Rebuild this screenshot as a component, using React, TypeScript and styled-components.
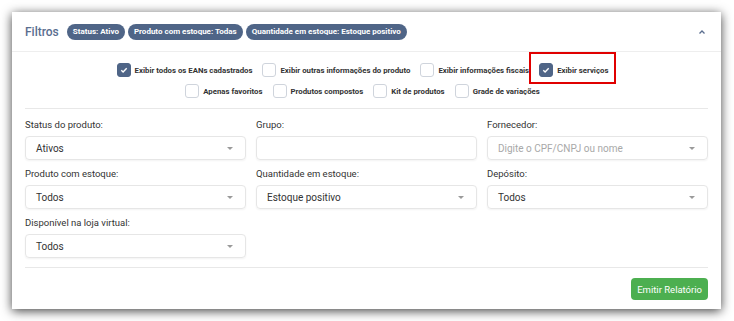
import React from 'react';
import styled, { createGlobalStyle } from 'styled-components';

const GlobalStyle = createGlobalStyle`
  html, body {
    margin: 0;
    padding: 0;
    background: #ffffff;
    font-family: Roboto, "Liberation Sans", Arial, sans-serif;
  }
`;

const Page = styled.div`
  padding: 12px 13px 12px 12px;
  width: 734px;
  height: 321px;
  box-sizing: border-box;
`;

const Card = styled.div`
  position: relative;
  background: #ffffff;
  height: 297px;
  box-shadow: 0 2px 10px rgba(0, 0, 0, 0.75);
  display: flex;
  flex-direction: column;
`;

const Header = styled.div`
  height: 39px;
  display: flex;
  align-items: center;
  padding: 0 13px;
  border-bottom: 1px solid #eeeeee;
`;

const Title = styled.span`
  font-size: 12px;
  font-weight: 500;
  color: #5a6e8f;
  margin-right: 8px;
`;

const Badge = styled.span`
  background: #4f6587;
  color: #ffffff;
  font-size: 8px;
  font-weight: 700;
  height: 16px;
  line-height: 16px;
  padding: 0 6px;
  border-radius: 8px;
  margin-right: 3px;
  white-space: nowrap;
`;

const Chevron = styled.svg`
  margin-left: auto;
  margin-right: 2px;
`;

const Body = styled.div`
  padding: 0 13px;
  display: flex;
  flex-direction: column;
  flex: 1;
`;

const CheckSection = styled.div`
  padding: 11px 0 10px;
  border-bottom: 1px solid #e8e8e8;
  display: flex;
  flex-direction: column;
  gap: 7px;
  align-items: center;
`;

const CheckRow = styled.div`
  display: flex;
  gap: 10px;
  margin-right: 8px;
`;

const CheckItem = styled.label`
  display: flex;
  align-items: center;
  gap: 4px;
  font-size: 7.8px;
  font-weight: 700;
  color: #333333;
  white-space: nowrap;
`;

const Box = styled.span<{ $checked?: boolean }>`
  width: 14px;
  height: 14px;
  box-sizing: border-box;
  border-radius: 3px;
  border: 1px solid ${p => (p.$checked ? '#4f6587' : '#cfd4dc')};
  background: ${p => (p.$checked ? '#4f6587' : '#ffffff')};
  display: flex;
  align-items: center;
  justify-content: center;
`;

const Highlight = styled.div`
  position: absolute;
  left: 517px;
  top: 40px;
  width: 87px;
  height: 32px;
  border: 2px solid #e00000;
  box-sizing: border-box;
`;

const Grid = styled.div`
  display: grid;
  grid-template-columns: repeat(3, 1fr);
  column-gap: 10px;
  row-gap: 8px;
  padding: 10px 0 9px;
  border-bottom: 1px solid #e8e8e8;
`;

const Field = styled.div`
  display: flex;
  flex-direction: column;
`;

const Label = styled.span`
  font-size: 9.5px;
  color: #333333;
  height: 17px;
  line-height: 12px;
`;

const Input = styled.div<{ $placeholder?: boolean }>`
  height: 24px;
  box-sizing: border-box;
  border: 1px solid #e6e6e6;
  border-radius: 4px;
  box-shadow: 0 1px 2px rgba(0, 0, 0, 0.05);
  display: flex;
  align-items: center;
  padding: 0 12px 0 10px;
  font-size: 10px;
  color: ${p => (p.$placeholder ? '#a8a8a8' : '#333333')};
`;

const Caret = styled.span`
  margin-left: auto;
  width: 0;
  height: 0;
  border-left: 3px solid transparent;
  border-right: 3px solid transparent;
  border-top: 3px solid #9a9a9a;
`;

const Footer = styled.div`
  display: flex;
  justify-content: flex-end;
  padding-top: 10px;
`;

const Button = styled.button`
  background: #4caf50;
  color: #ffffff;
  border: none;
  border-radius: 4px;
  height: 22px;
  padding: 0 6px;
  font-family: inherit;
  font-size: 9.5px;
`;

const Check = () => (
  <svg width="8" height="8" viewBox="0 0 8 8">
    <path d="M1.3 4.2 L3.1 5.9 L6.7 2.2" fill="none" stroke="#fff" strokeWidth="1.4" />
  </svg>
);

const CheckBox = ({ label, checked }: { label: string; checked?: boolean }) => (
  <CheckItem>
    <Box $checked={checked}>{checked && <Check />}</Box>
    {label}
  </CheckItem>
);

const Select = ({ label, value, placeholder, caret = true }: { label: string; value?: string; placeholder?: string; caret?: boolean }) => (
  <Field>
    <Label>{label}</Label>
    <Input $placeholder={!value && !!placeholder}>
      {value || placeholder}
      {caret && <Caret />}
    </Input>
  </Field>
);

const App: React.FC = () => (
  <>
    <GlobalStyle />
    <Page>
      <Card>
        <Header>
          <Title>Filtros</Title>
          <Badge>Status: Ativo</Badge>
          <Badge>Produto com estoque: Todas</Badge>
          <Badge>Quantidade em estoque: Estoque positivo</Badge>
          <Chevron width="8" height="6" viewBox="0 0 8 6">
            <path d="M1.5 4.5 L4 2 L6.5 4.5" fill="none" stroke="#5a6e8f" strokeWidth="1.3" />
          </Chevron>
        </Header>
        <Body>
          <CheckSection>
            <CheckRow>
              <CheckBox label="Exibir todos os EANs cadastrados" checked />
              <CheckBox label="Exibir outras informações do produto" />
              <CheckBox label="Exibir informações fiscais" />
              <CheckBox label="Exibir serviços" checked />
            </CheckRow>
            <CheckRow>
              <CheckBox label="Apenas favoritos" />
              <CheckBox label="Produtos compostos" />
              <CheckBox label="Kit de produtos" />
              <CheckBox label="Grade de variações" />
            </CheckRow>
          </CheckSection>
          <Grid>
            <Select label="Status do produto:" value="Ativos" />
            <Select label="Grupo:" caret={false} />
            <Select label="Fornecedor:" placeholder="Digite o CPF/CNPJ ou nome" />
            <Select label="Produto com estoque:" value="Todos" />
            <Select label="Quantidade em estoque:" value="Estoque positivo" />
            <Select label="Depósito:" value="Todos" />
            <Select label="Disponível na loja virtual:" value="Todos" />
          </Grid>
          <Footer>
            <Button>Emitir Relatório</Button>
          </Footer>
        </Body>
        <Highlight />
      </Card>
    </Page>
  </>
);

export default App;
